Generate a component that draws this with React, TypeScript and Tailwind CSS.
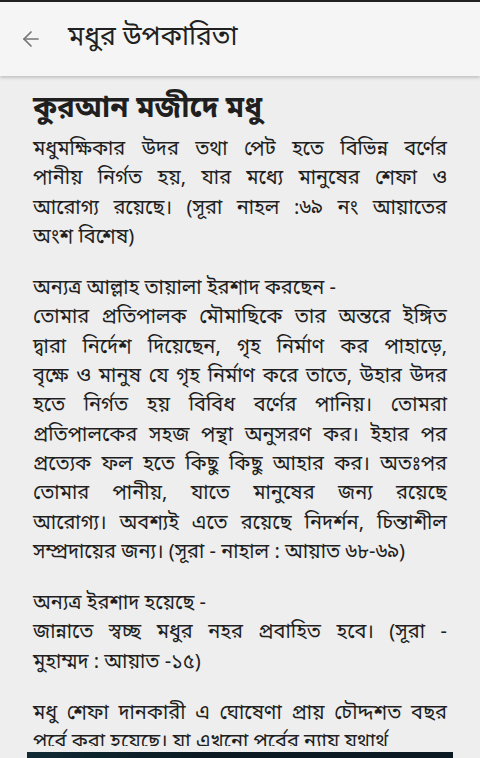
import { ArrowLeft } from "lucide-react";

const bn = { fontFamily: '"Noto Sans Bengali", "Noto Serif Bengali", "Lohit Bengali", "FreeSans", "Noto Sans", sans-serif' };

// Each paragraph is a list of blocks; each block is a list of the lines as they break on the device.
const paragraphs: string[][][] = [
  [
    [
      "মধুমক্ষিকার উদর তথা পেট হতে বিভিন্ন বর্ণের",
      "পানীয় নির্গত হয়, যার মধ্যে মানুষের শেফা ও",
      "আরোগ্য রয়েছে। (সূরা নাহল :৬৯ নং আয়াতের",
      "অংশ বিশেষ)",
    ],
  ],
  [
    ["অন্যত্র আল্লাহ তায়ালা ইরশাদ করছেন -"],
    [
      "তোমার প্রতিপালক মৌমাছিকে তার অন্তরে ইঙ্গিত",
      "দ্বারা নির্দেশ দিয়েছেন, গৃহ নির্মাণ কর পাহাড়ে,",
      "বৃক্ষে ও মানুষ যে গৃহ নির্মাণ করে তাতে, উহার উদর",
      "হতে নির্গত হয় বিবিধ বর্ণের পানিয়। তোমরা",
      "প্রতিপালকের সহজ পন্থা অনুসরণ কর। ইহার পর",
      "প্রত্যেক ফল হতে কিছু কিছু আহার কর। অতঃপর",
      "তোমার পানীয়, যাতে মানুষের জন্য রয়েছে",
      "আরোগ্য। অবশ্যই এতে রয়েছে নিদর্শন, চিন্তাশীল",
      "সম্প্রদায়ের জন্য। (সূরা - নাহাল : আয়াত ৬৮-৬৯)",
    ],
  ],
  [
    ["অন্যত্র ইরশাদ হয়েছে -"],
    ["জান্নাতে স্বচ্ছ মধুর নহর প্রবাহিত হবে। (সূরা -", "মুহাম্মদ : আয়াত -১৫)"],
  ],
  [
    [
      "মধু শেফা দানকারী এ ঘোষেণা প্রায় চৌদ্দশত বছর",
      "পূর্বে করা হয়েছে। যা এখনো পূর্বের ন্যায় যথার্থ",
    ],
  ],
];

export default function App() {
  return (
    <div className="flex h-[758px] w-[480px] flex-col overflow-hidden bg-[#eeeeee]" style={bn}>
      <div className="h-[2px] shrink-0 bg-[#222]" />
      <header className="z-10 flex h-[74px] shrink-0 items-center bg-[#f5f5f5] shadow-[0_2px_3px_rgba(0,0,0,0.18)]">
        <button type="button" className="ml-[19px] text-[#757575]" aria-label="Back">
          <ArrowLeft className="size-6" strokeWidth={1.7} />
        </button>
        <h1 className="ml-[25px] text-[26.5px] text-[#212121]">মধুর উপকারিতা</h1>
      </header>
      <main className="min-h-0 flex-1 overflow-hidden px-[33px] pt-[13px] text-[#1f1f1f]">
        <h2 className="mb-[5px] text-[29.5px] font-bold leading-[42px]">কুরআন মজীদে মধু</h2>
        {paragraphs.map((blocks, i) => (
          <div key={i} className="mb-[22px]">
            {blocks.map((lines, j) => (
              <p key={j} className="text-[20px] leading-[29.3px]">
                {lines.map((line, k) => (
                  <span
                    key={k}
                    className={
                      k < lines.length - 1
                        ? "block whitespace-nowrap text-justify [text-align-last:justify]"
                        : "block whitespace-nowrap text-left"
                    }
                  >
                    {line}
                  </span>
                ))}
              </p>
            ))}
          </div>
        ))}
      </main>
      <div className="mx-[27px] mt-[6px] h-[6px] shrink-0 bg-[linear-gradient(90deg,#0f2a33,#0b1a22_40%,#0b1a22)]" />
    </div>
  );
}
